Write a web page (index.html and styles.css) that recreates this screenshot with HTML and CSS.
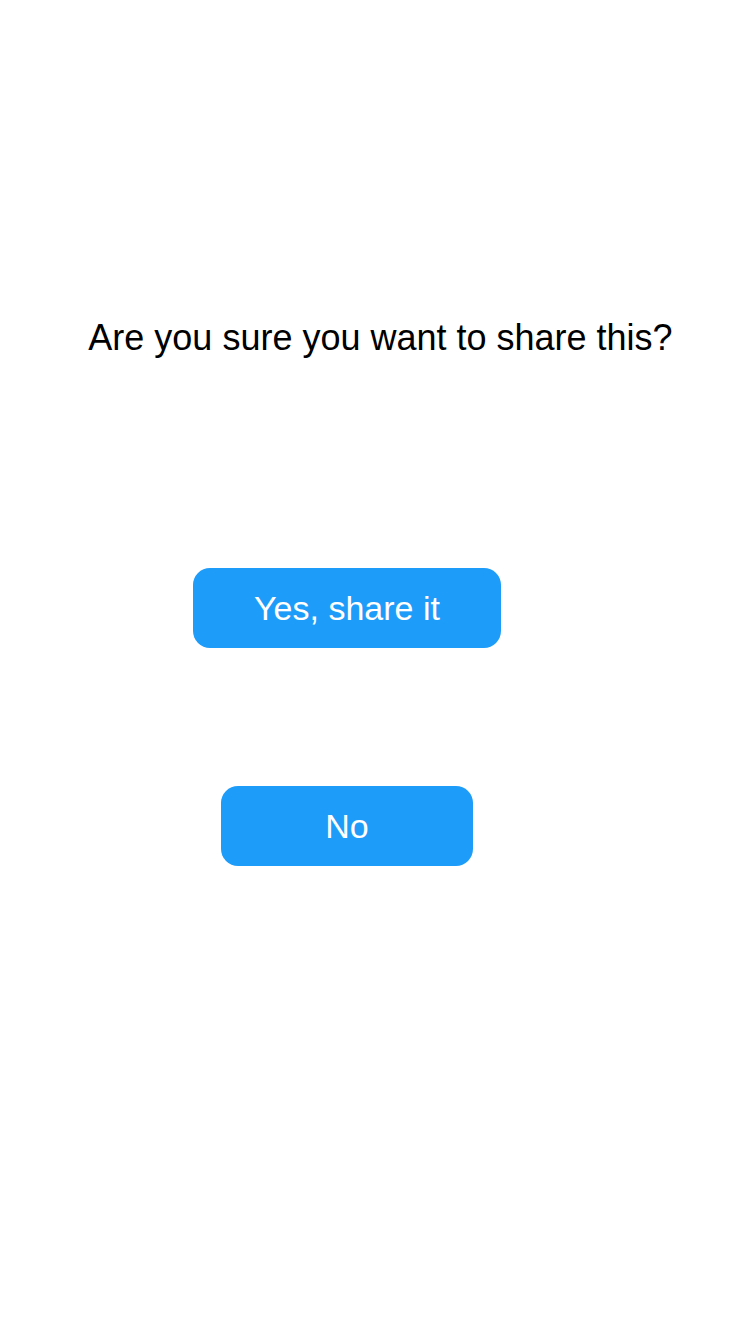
FILE: index.html
```html
<!DOCTYPE html>
<html>
<head>
<meta charset="utf-8">
<link rel="stylesheet" href="styles.css">
</head>
<body>
<main class="screen">
  <h1 class="question">Are you sure you want to share this?</h1>
  <div class="actions">
    <button class="btn btn-yes">Yes, share it</button>
    <button class="btn btn-no">No</button>
  </div>
</main>
</body>
</html>
```
FILE: styles.css
```css
html, body {
  margin: 0;
  padding: 0;
  background: #ffffff;
}
.screen {
  width: 750px;
  height: 1334px;
  display: flex;
  flex-direction: column;
  align-items: center;
  font-family: "Liberation Sans", Arial, sans-serif;
}
.question {
  margin: 316px 0 0 11px;
  font-size: 36px;
  font-weight: normal;
  line-height: 44px;
  color: #000;
}
.actions {
  margin-top: 208px;
  margin-right: 56px;
  display: flex;
  flex-direction: column;
  align-items: center;
  gap: 138px;
}
.btn {
  height: 80px;
  border: none;
  border-radius: 17px;
  background: #1e9cf9;
  color: #fff;
  font-family: "Liberation Sans", Arial, sans-serif;
  font-size: 34px;
  padding: 0;
}
.btn-yes { width: 308px; }
.btn-no { width: 252px; }
```
